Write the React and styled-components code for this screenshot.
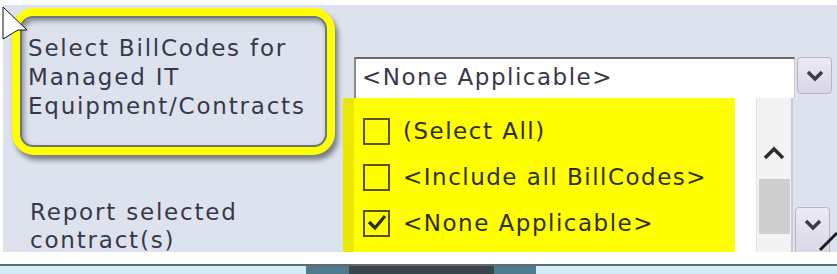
import React from "react";
import styled, { createGlobalStyle } from "styled-components";

const Global = createGlobalStyle`
  html, body { margin: 0; padding: 0; background: #ffffff; }
  body { font-family: "DejaVu Sans", Verdana, sans-serif; }
`;

const Page = styled.div`
  width: 837px;
  height: 274px;
  overflow: hidden;
  display: flex;
  flex-direction: column;
  position: relative;
  background: #ffffff;
`;

const Panel = styled.div`
  margin: 5px 0 0 3px;
  height: 247px;
  background: #dce3ee;
  display: grid;
  grid-template-columns: 340px 1fr;
  overflow: hidden;
  flex-shrink: 0;
`;

const LeftCol = styled.div`
  display: flex;
  flex-direction: column;
  padding: 3px 0 0 9px;
`;

const Highlight = styled.div`
  width: 323px;
  height: 147px;
  box-sizing: border-box;
  border: 8px solid #ffff00;
  border-radius: 22px;
  box-shadow: 3px 5px 5px rgba(40, 40, 50, 0.55);
  background: #ffff00;
`;

const LabelBox = styled.div`
  height: 100%;
  box-sizing: border-box;
  border: 2px solid #6f737e;
  border-radius: 13px;
  background: #dce3ee;
  box-shadow: inset 2px 3px 5px rgba(50, 50, 60, 0.5);
  padding: 16px 0 0 6px;
`;

const LabelText = styled.div`
  font-size: 23px;
  letter-spacing: 1.8px;
  line-height: 29px;
  color: #383849;
  white-space: nowrap;
`;

const SecondLabel = styled(LabelText)`
  margin: 43px 0 0 18px;
  line-height: 28px;
`;

const RightCol = styled.div`
  display: flex;
  flex-direction: column;
  padding-top: 52px;
`;

const ComboRow = styled.div`
  display: flex;
  align-items: flex-start;
  height: 41px;
`;

const Input = styled.div`
  margin-left: 11px;
  width: 441px;
  height: 41px;
  box-sizing: border-box;
  background: #ffffff;
  border-top: 2px solid #6a6a6a;
  border-left: 2px solid #8a8a8a;
  border-right: 1px solid #c8c8c8;
  padding: 5px 0 0 6px;
  font-size: 23px;
  letter-spacing: 1.5px;
  color: #383849;
  white-space: nowrap;
  overflow: hidden;
`;

const DropButton = styled.div`
  width: 35px;
  height: ${(p) => p.$h || 37}px;
  margin-left: 2px;
  margin-top: ${(p) => p.$top || 0}px;
  box-sizing: border-box;
  border: 1px solid #b4b6c4;
  border-radius: 4px;
  background: linear-gradient(#eceaf4, #d8d6e6);
  display: flex;
  align-items: ${(p) => (p.$top ? "flex-start" : "center")};
  padding-top: ${(p) => (p.$top ? 10 : 0)}px;
  justify-content: center;
  flex-shrink: 0;
`;

const ListRow = styled.div`
  display: flex;
  align-items: stretch;
  height: 154px;
`;

const ListBox = styled.div`
  width: 450px;
  display: flex;
  background: #ffffff;
  border-right: 2px solid #c9cbd2;
  box-sizing: border-box;
`;

const Yellow = styled.div`
  width: 392px;
  background: #ffff00;
  border-left: 11px solid #e9e900;
  box-sizing: border-box;
  padding: 10px 0 0 9px;
  display: flex;
  flex-direction: column;
  overflow: hidden;
`;

const Item = styled.div`
  height: 46px;
  flex-shrink: 0;
  display: flex;
  align-items: center;
  gap: 13px;
  font-size: 23px;
  letter-spacing: 1.5px;
  color: #2e2e10;
  white-space: nowrap;
`;

const Check = styled.div`
  width: 27px;
  height: 27px;
  box-sizing: border-box;
  border: 2px solid #55550f;
  display: flex;
  align-items: center;
  justify-content: center;
  flex-shrink: 0;
`;

const Gap = styled.div`
  flex: 1;
`;

const Scroll = styled.div`
  width: 35px;
  background: #f3f3f3;
  border-left: 1px solid #e2e2e2;
  display: flex;
  flex-direction: column;
  align-items: center;
  padding-top: 47px;
  box-sizing: border-box;
`;

const Thumb = styled.div`
  width: 31px;
  height: 55px;
  margin-top: 18px;
  background: #cfcfcf;
`;

const SideCol = styled.div`
  display: flex;
  flex-direction: column;
`;

const WhiteGap = styled.div`
  height: 12px;
  flex-shrink: 0;
`;

const Footer = styled.div`
  height: 8px;
  border-top: 2px solid #5f6a72;
  background: #d4ecf8;
  display: flex;
  padding-left: 306px;
  flex-shrink: 0;
`;

const Seg = styled.div`
  width: ${(p) => p.$w}px;
  background: ${(p) => p.$c};
`;

const Overlay = styled.svg`
  position: absolute;
  left: 0;
  top: 0;
  pointer-events: none;
`;

const ChevronDown = () => (
  <svg width="20" height="14" viewBox="0 0 20 14">
    <path d="M3 3 L10 10 L17 3" fill="none" stroke="#3c3c48" strokeWidth="3.5" />
  </svg>
);

const ChevronUp = () => (
  <svg width="24" height="16" viewBox="0 0 24 16">
    <path d="M3 13 L12 4 L21 13" fill="none" stroke="#2e2e2e" strokeWidth="3.5" />
  </svg>
);

const Tick = () => (
  <svg width="20" height="18" viewBox="0 0 20 18">
    <path d="M2 8 L8 14 L18 2" fill="none" stroke="#2a2a10" strokeWidth="3.2" />
  </svg>
);

export default function App() {
  return (
    <>
      <Global />
      <Page>
        <Panel>
          <LeftCol>
            <Highlight>
              <LabelBox>
                <LabelText>
                  Select BillCodes for
                  <br />
                  Managed IT
                  <br />
                  Equipment/Contracts
                </LabelText>
              </LabelBox>
            </Highlight>
            <SecondLabel>
              Report selected
              <br />
              contract(s)
            </SecondLabel>
          </LeftCol>
          <RightCol>
            <ComboRow>
              <Input>&lt;None Applicable&gt;</Input>
              <DropButton>
                <ChevronDown />
              </DropButton>
            </ComboRow>
            <ListRow>
              <ListBox>
                <Yellow>
                  <Item>
                    <Check />
                    (Select All)
                  </Item>
                  <Item>
                    <Check />
                    &lt;Include all BillCodes&gt;
                  </Item>
                  <Item>
                    <Check>
                      <Tick />
                    </Check>
                    &lt;None Applicable&gt;
                  </Item>
                  <Item>
                    <Check />
                  </Item>
                </Yellow>
                <Gap />
                <Scroll>
                  <ChevronUp />
                  <Thumb />
                </Scroll>
              </ListBox>
              <SideCol>
                <DropButton $top={109} $h={50}>
                  <ChevronDown />
                </DropButton>
              </SideCol>
            </ListRow>
          </RightCol>
        </Panel>
        <WhiteGap />
        <Footer>
          <Seg $w={43} $c="#4f7a8e" />
          <Seg $w={145} $c="#3b444b" />
          <Seg $w={42} $c="#4f7a8e" />
        </Footer>
        <Overlay width="837" height="274">
          <polygon points="3,7 27,30 18,30 3,39" fill="#ffffff" stroke="#111111" strokeWidth="1" />
          <line x1="820" y1="250" x2="837" y2="233" stroke="#1a1a1a" strokeWidth="3" />
        </Overlay>
      </Page>
    </>
  );
}
